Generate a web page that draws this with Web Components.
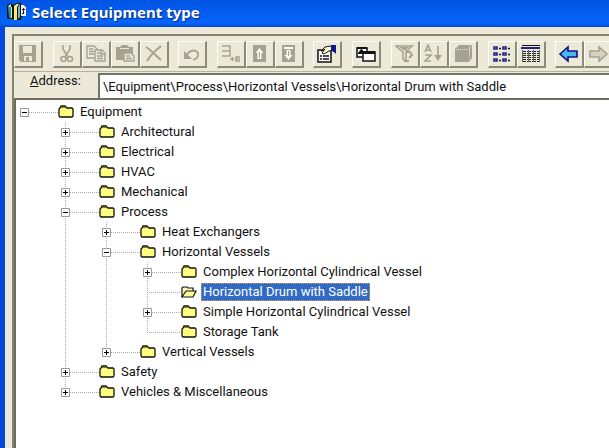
<!DOCTYPE html>
<html lang="en">
<head>
<meta charset="utf-8">
<title>Select Equipment type</title>
<style>
html, body { height: 100%; }
body { margin: 0; overflow: hidden; font: 13px/20px Roboto, "Liberation Sans", Arial, sans-serif; color: #111; }
</style>
</head>
<body>
<app-window heading="Select Equipment type">
  <tool-bar slot="toolbar">
    <tool-group><tool-button icon="save" label="Save" off></tool-button></tool-group>
    <tool-group>
      <tool-button icon="cut" label="Cut" off></tool-button>
      <tool-button icon="copy" label="Copy" off></tool-button>
      <tool-button icon="paste" label="Paste" off></tool-button>
      <tool-button icon="del" label="Delete" off></tool-button>
    </tool-group>
    <tool-group near><tool-button icon="undo" label="Undo" off></tool-button></tool-group>
    <tool-group>
      <tool-button icon="rename" label="Rename" off></tool-button>
      <tool-button icon="up" label="Move up" off></tool-button>
      <tool-button icon="down" label="Move down" off></tool-button>
    </tool-group>
    <tool-group near><tool-button icon="props" label="Properties"></tool-button></tool-group>
    <tool-group><tool-button icon="windows" label="New window"></tool-button></tool-group>
    <tool-group>
      <tool-button icon="filter" label="Filter" off></tool-button>
      <tool-button icon="sort" label="Sort" off></tool-button>
      <tool-button icon="cube" label="View object" off></tool-button>
    </tool-group>
    <tool-group>
      <tool-button icon="list" label="List"></tool-button>
      <tool-button icon="details" label="Details"></tool-button>
    </tool-group>
    <tool-group near>
      <tool-button icon="back" label="Back"></tool-button>
      <tool-button icon="forward" label="Forward" off></tool-button>
    </tool-group>
  </tool-bar>
  <address-bar slot="address" value="\Equipment\Process\Horizontal Vessels\Horizontal Drum with Saddle"></address-bar>
  <tree-view slot="content">
    <tree-node label="Equipment" state="open" root>
      <tree-node label="Architectural" state="closed"></tree-node>
      <tree-node label="Electrical" state="closed"></tree-node>
      <tree-node label="HVAC" state="closed"></tree-node>
      <tree-node label="Mechanical" state="closed"></tree-node>
      <tree-node label="Process" state="open">
        <tree-node label="Heat Exchangers" state="closed"></tree-node>
        <tree-node label="Horizontal Vessels" state="open">
          <tree-node label="Complex Horizontal Cylindrical Vessel" state="closed"></tree-node>
          <tree-node label="Horizontal Drum with Saddle" selected></tree-node>
          <tree-node label="Simple Horizontal Cylindrical Vessel" state="closed"></tree-node>
          <tree-node label="Storage Tank"></tree-node>
        </tree-node>
        <tree-node label="Vertical Vessels" state="closed"></tree-node>
      </tree-node>
      <tree-node label="Safety" state="closed"></tree-node>
      <tree-node label="Vehicles &amp; Miscellaneous" state="closed"></tree-node>
    </tree-node>
  </tree-view>
</app-window>
<script>
const G = '#a5a292';
const icons = {
  save: `<path fill="${G}" fill-rule="evenodd" d="M1 1h17v17H3l-2-2zM5 2v7h9V2zM6 12v5h2v-4h3v4h3v-5z"/><path fill="${G}" d="M15 3h1v1h-1z"/>`,
  cut: `<g fill="none" stroke="${G}" stroke-width="1.6"><path d="M6 1v4l5 8M13 1v4l-5 8"/><circle cx="6.500" cy="15" r="2.500"/><circle cx="13" cy="15" r="2.500"/></g>`,
  copy: `<g fill="#ece9d8" stroke="${G}" stroke-width="1.4"><path d="M1 2h7l3 3v9H1z"/><path d="M3 5h4M3 7.500h5M3 10h5"/><path d="M9 6h7l3 3v8H9z"/><path d="M15 6v4h4M11 9h3M11 12h6M11 14.500h6"/></g>`,
  paste: `<path fill="${G}" d="M1 3h4l2-2h5l2 2h4v7h-8v6H1z"/><path stroke="#ece9d8" d="M5 4.500h9"/><path fill="#ece9d8" stroke="${G}" stroke-width="1.4" d="M9 9h7l3 3v5H9zM11 12h4M11 14.500h6"/>`,
  del: `<path fill="none" stroke="${G}" stroke-width="2" d="M2 3c5 3 10 9 15 13M17 2C12 6 7 10 3 17"/>`,
  undo: `<path fill="none" stroke="${G}" stroke-width="1.8" d="M4 12c3-6 10-7 12-3 1 4-2 6-5 7"/><path fill="${G}" d="M2 7v8h8z"/>`,
  rename: `<g fill="none" stroke="${G}" stroke-width="1.5"><path d="M1 2h8v10H1M1 7h8M9 15h4M11.500 13v4M19 13h-4v4h4M15 15h4"/></g>`,
  up: `<path fill="${G}" d="M3 1h13v17H3z"/><path fill="#fffef4" d="M9.500 4l4 5h-2v6h-4V9h-2z"/><path fill="${G}" d="M9 8h1v6H9z"/>`,
  down: `<path fill="${G}" d="M3 1h13v17H3z"/><path fill="#fffef4" d="M5 3h9v2H5zM9.500 16l4-5h-2V6h-4v5h-2z"/><path fill="${G}" d="M9 7h1v5H9z"/>`,
  props: `<path fill="#fff" stroke="#111" stroke-width="1.500" d="M1 6h13v12H1z"/><path stroke="#111" stroke-width="1.500" d="M3 12h2M6 12h6M3 15h2M6 15h6"/><path fill="#fffbd0" stroke="#111" d="M4 7l4-4 6-1 2 1v3l-4 1-5 3-2-1 3-4-3 2z"/><path fill="#15158c" d="M14 1h5v9l-2-2-3-1z"/>`,
  windows: `<path fill="#fff" stroke="#111" stroke-width="1.500" d="M1 4h10v9H1z"/><path fill="#111" d="M1 3h10v2H1zM2 9l3-4 2 1v4H2z"/><path fill="#fff" stroke="#111" stroke-width="1.500" d="M7 8h12v9H7z"/><path fill="#111" d="M6 7h13v3H6z"/>`,
  filter: `<path fill="#ece9d8" stroke="${G}" stroke-width="1.600" d="M1 2h16l-6 6v9l-3-2V8z"/><path fill="none" stroke="${G}" stroke-width="2" d="M11 8h4l2 3-3 3M9 17h5"/><path fill="${G}" d="M4 3h10l-4 4z"/>`,
  sort: `<path fill="none" stroke="${G}" stroke-width="1.600" d="M1 8l3-7 3 7M2 6h4M1 11h6l-6 6h6M14 2v13"/><path fill="${G}" d="M10 11h8l-4 6z"/>`,
  cube: `<path fill="${G}" d="M2 5l4-4h13l-3 4v13H2zM17 4l2-3v13l-3 4z"/><path stroke="#ece9d8" stroke-dasharray="1 1" fill="none" d="M3 5.500h12l3-4"/>`,
  list: `<g fill="none" stroke="#22228c" stroke-width="1.600"><path d="M2 3h3v2H2zM11 3h3v2h-3zM2 9h3v2H2zM11 9h3v2h-3zM2 15h3v2H2zM11 15h3v2h-3z"/><path stroke="#111" d="M7 4.500h2M16 4.500h2M7 10.500h2M16 10.500h2M7 16.500h2M16 16.500h2"/></g>`,
  details: `<path fill="#111" d="M1 1h18v1H1z"/><path fill="#22228c" d="M0 3h19v2H0z"/><path stroke="#222" stroke-dasharray="4 1" d="M1 7.500h18M1 9.500h18M1 11.500h18M1 13.500h18M1 15.500h18M1 17.500h18"/><path stroke="#666" d="M1.500 6v12M7.500 6v12M12.500 6v12M18.500 6v12"/>`,
  back: `<path fill="#48b8f4" stroke="#10107c" stroke-width="1.600" d="M1 10l8-7v4h9v6H9v4z"/>`,
  forward: `<path fill="#d5d2c2" stroke="${G}" stroke-width="1.600" d="M19 10l-8-7v4H2v6h9v4z"/>`
};

const define = (name, html, setup) => {
  const template = document.createElement('template');
  template.innerHTML = html;
  customElements.define(name, class extends HTMLElement {
    constructor() {
      super();
      this.attachShadow({ mode: 'open' }).append(template.content.cloneNode(true));
    }
    connectedCallback() { if (setup) setup(this, s => this.shadowRoot.querySelector(s)); }
  });
};

define('app-window', `<style>
  :host { display: flex; flex-direction: column; height: 100vh; background: #ece9d8; }
  header { display: flex; align-items: center; gap: 4px; height: 27px; flex: none; padding: 0 6px 3px; box-sizing: border-box;
    background: linear-gradient(#0054e3, #0560f4 60%, #0665fb 85%, #0348cf); }
  h1 { margin: 0; font: bold 15px/20px "Noto Sans", "Open Sans", sans-serif; color: #fff; text-shadow: 1px 1px 1px #0a2a80; white-space: nowrap; }
  main { flex: 1; min-height: 0; display: flex; flex-direction: column; border-left: 5px solid #0845dc; padding: 7px 0 0 7px; }
  .panel { flex: 1; min-height: 0; display: flex; flex-direction: column; border: solid #858272; border-width: 2px 0 0 2px; }
  svg { flex: none; }
</style>
<header>
  <svg width="22" height="20" viewBox="0 0 22 20" aria-hidden="true">
    <path fill="#111" d="M1 3l4-2 2 2 5-2h3v2h5v9l-3 2-2 2v2H9l-1-1H3L1 16z"/>
    <path fill="#2d8e91" d="M2 5h3v11H3z"/><path fill="#b9efe9" d="M2 4l3-2v3H3z"/><path fill="#b9efe9" d="M5 5h1v11H5z"/>
    <path fill="#ffe866" d="M8 5h3v13H8z"/><path fill="#fff5b0" d="M8 4l3-2h2l-2 3H8z"/><path fill="#67b8cb" d="M12 5l2-3v13l-2 2z"/>
    <path fill="#eee" d="M15 3h3l2 2v9h-5z"/><path stroke="#222" d="M16 7.500h3M17.500 6v5M16 11.500h2"/>
  </svg>
  <h1></h1>
</header>
<main><div class="panel"><slot name="toolbar"></slot><slot name="address"></slot><slot name="content"></slot></div></main>`,
(el, $) => { $('h1').textContent = el.getAttribute('heading'); });

define('tool-bar', `<style>
  :host { display: flex; flex: none; padding: 5px 0 3px; overflow: hidden; border-bottom: 1px solid #b5b2a2; }
</style><slot></slot>`);

define('tool-group', `<style>
  :host { display: flex; flex: none; margin-left: 10px; }
  :host([near]) { margin-left: 9px; }
  :host(:first-child) { margin-left: 0; }
</style><slot></slot>`);

define('tool-button', `<style>
  :host { display: block; flex: none; }
  button { display: grid; place-items: center; box-sizing: border-box; width: 29px; height: 27px; padding: 0; background: #ece9d8;
    border: solid; border-width: 1px 2px 2px 1px; border-color: #fffef8 #8d8a7a #8d8a7a #fffef8; }
  svg { display: block; }
</style><button type="button"><svg width="20" height="20" viewBox="0 0 20 20" aria-hidden="true"></svg></button>`,
(el, $) => {
  $('button').setAttribute('aria-label', el.getAttribute('label'));
  $('button').disabled = el.hasAttribute('off');
  $('svg').innerHTML = icons[el.getAttribute('icon')];
});

define('address-bar', `<style>
  :host { display: flex; flex: none; height: 26px; }
  label { width: 84px; box-sizing: border-box; padding-left: 16px; line-height: 18px; }
  input { flex: 1; min-width: 0; box-sizing: border-box; height: 25px; margin: 1px 0 0; padding: 0 3px; font: inherit; color: inherit; background: #fff;
    border: solid #77756a; border-width: 2px 0 0 2px; border-radius: 0; outline: 0; }
</style><label for="path"><u>A</u>ddress:</label><input id="path" type="text">`,
(el, $) => { $('input').value = el.getAttribute('value'); });

define('tree-view', `<style>
  :host { display: block; flex: 1; min-height: 0; overflow: hidden; background: #fff; border: solid #6e6c60; border-width: 2px 0 0 2px; padding: 2px 0 0 4px; }
</style><slot></slot>`);

define('tree-node', `<style>
  :host { display: block; background: repeating-linear-gradient(#aaa 0 1px, transparent 1px 2px) 4px 0 / 1px 100% no-repeat; }
  :host(:last-child) { background-size: 1px 10px; }
  :host([root]) { background: none; }
  .row { display: flex; align-items: center; height: 20px; }
  button { flex: none; display: block; width: 9px; height: 9px; padding: 0; border: 0; background: #fff; }
  button svg, .folder { display: block; }
  .line { flex: none; width: 29px; height: 1px; background: repeating-linear-gradient(90deg, #aaa 0 1px, transparent 1px 2px); }
  .folder { flex: none; }
  .label { margin-left: 4px; padding: 0 2px; height: 18px; line-height: 18px; white-space: nowrap; }
  .children { margin-left: 41px; }
  :host(:not([state])) button { display: none; }
  :host(:not([state])) .line { width: 34px; margin-left: 4px; }
  :host([selected]) .label { background: #316ac5; color: #fff; outline: 1px dotted #d8a040; outline-offset: -1px; }
  .shut, .open { display: none; }
  :host(:not([selected])) .shut, :host([selected]) .open { display: block; }
  :host([state=open]) .plus { display: none; }
</style>
<div class="row">
  <button type="button"><svg width="9" height="9" viewBox="0 0 9 9" aria-hidden="true"><path fill="#fff" stroke="#999" d="M.5.5h8v8h-8z"/><path stroke="#000" d="M2 4.500h5"/><path class="plus" stroke="#000" d="M4.500 2v5"/></svg></button>
  <span class="line"></span>
  <svg class="folder" width="16" height="14" viewBox="0 0 16 14" aria-hidden="true">
    <g class="shut"><path fill="#ffff80" stroke="#111" stroke-width="1.300" d="M1 4l1-1 1-2h4l2 2h5l1 1v7l-1 1H2l-1-1z"/><path fill="#8a7c1e" d="M3 2h4l1 1H3z"/></g>
    <g class="open"><path fill="#fffbc0" stroke="#111" stroke-width="1.200" d="M1 12V3l1-1h4l1 1h5v3"/><path fill="#ffff9c" stroke="#111" stroke-width="1.200" d="M1 12l4-6h10l-3 6z"/></g>
  </svg>
  <span class="label"></span>
</div>
<div class="children"><slot></slot></div>`,
(el, $) => {
  const label = el.getAttribute('label');
  $('.label').textContent = label;
  $('button').setAttribute('aria-label', (el.getAttribute('state') === 'open' ? 'Collapse ' : 'Expand ') + label);
});
</script>
</body>
</html>
